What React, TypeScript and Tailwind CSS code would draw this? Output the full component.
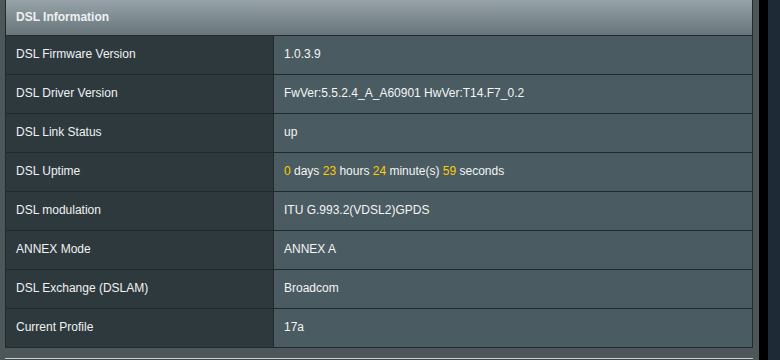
import React from "react";

const rows: { label: string; value: React.ReactNode }[] = [
  { label: "DSL Firmware Version", value: "1.0.3.9" },
  { label: "DSL Driver Version", value: "FwVer:5.5.2.4_A_A60901 HwVer:T14.F7_0.2" },
  { label: "DSL Link Status", value: "up" },
  {
    label: "DSL Uptime",
    value: (
      <span>
        <span className="text-[#ffcc00]">0</span> days <span className="text-[#ffcc00]">23</span> hours{" "}
        <span className="text-[#ffcc00]">24</span> minute(s) <span className="text-[#ffcc00]">59</span> seconds
      </span>
    ),
  },
  { label: "DSL modulation", value: "ITU G.993.2(VDSL2)GPDS" },
  { label: "ANNEX Mode", value: "ANNEX A" },
  { label: "DSL Exchange (DSLAM)", value: "Broadcom" },
  { label: "Current Profile", value: "17a" },
];

export default function App() {
  return (
    <div
      className="w-[780px] h-[360px] overflow-hidden flex bg-[#4d5659] text-[12px] text-white"
      style={{ fontFamily: '"Liberation Sans", Arial, sans-serif' }}
    >
      <div className="w-[759px] pl-[5px] pr-[6px] flex flex-col">
        <div className="border-x border-[#222a2e] flex flex-col">
          <div className="h-[36px] bg-gradient-to-b from-[#97a3a8] to-[#67757b] border-b border-[#222a2e] flex items-center pl-[10px] pb-[2px] font-bold text-[#eef0f1]">
            DSL Information
          </div>
          {rows.map((r) => (
            <div key={r.label} className="flex h-[39px] border-b border-[#222a2e]">
              <div className="w-[268px] bg-[#2e393e] border-r border-[#222a2e] flex items-center pl-[10px] pb-[2px] text-[#f0f2f2]">
                {r.label}
              </div>
              <div className="flex-1 bg-[#4a5b61] flex items-center pl-[10px] pb-[2px] text-[#f4f5f5]">
                <span>{r.value}</span>
              </div>
            </div>
          ))}
        </div>
        <div className="mt-[10px] h-[10px] border-t border-[#cbd1d3] bg-[#3e484c]"></div>
      </div>
      <div className="w-[9px] bg-black"></div>
      <div className="flex-1 bg-[#1e2b36]"></div>
    </div>
  );
}
